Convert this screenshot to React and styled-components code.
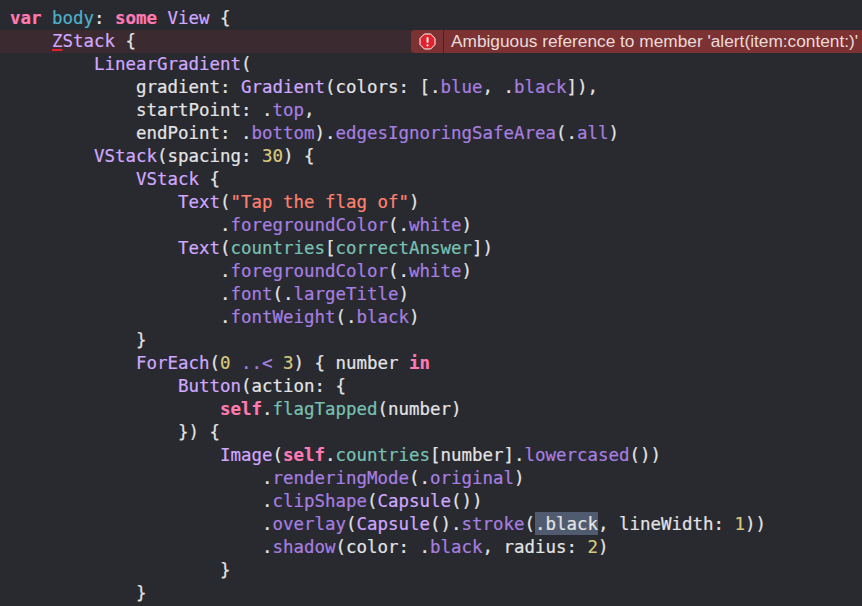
import React from "react";
import styled, { createGlobalStyle } from "styled-components";

const Global = createGlobalStyle`
  html, body { margin: 0; padding: 0; background: #292a30; }
  body { width: 862px; height: 606px; overflow: hidden; }
`;

const Editor = styled.div`
  width: 862px;
  height: 606px;
  overflow: hidden;
  padding-top: 7px;
  box-sizing: border-box;
  background: #292a30;
  color: #e4e4e5;
  font-family: "DejaVu Sans Mono", "Liberation Mono", monospace;
  font-size: 17.44px;
  font-weight: 400;
  -webkit-text-stroke: 0.2px;
`;

const Line = styled.div`
  display: flex;
  align-items: stretch;
  height: 23px;
  line-height: 23px;
  background: ${(p) => (p.$error ? "#3b2a2f" : "transparent")};
`;

const Code = styled.code`
  display: block;
  flex: 1;
  font: inherit;
  white-space: pre;
  padding-left: ${(p) => 10 + p.$indent * 42}px;
`;

const Kw = styled.span`color: #ff7ab2; font-weight: 700;`;
const Type = styled.span`color: #d0a8ff;`;
const Member = styled.span`color: #a77fe0;`;
const Str = styled.span`color: #ff8170;`;
const Num = styled.span`color: #d9c97c;`;
const Proj = styled.span`color: #78c2b3;`;
const Decl = styled.span`color: #4eb0cc;`;
const Selected = styled.span`
  display: inline-block;
  height: 22px;
  line-height: 22px;
  vertical-align: top;
  margin-top: -1px;
  padding-top: 1px;
  background: #515b70;
`;
const Squiggle = styled.span`
  color: #d0a8ff;
  text-decoration: underline;
  text-decoration-color: #e0202a;
  text-decoration-thickness: 2px;
  text-underline-offset: 2px;
`;

const Bubble = styled.div`
  display: flex;
  align-items: center;
  width: 451px;
  flex: none;
  background: #7c3232;
  border-radius: 4px 0 0 4px;
  overflow: hidden;
  -webkit-text-stroke: 0;
`;

const BubbleIcon = styled.div`
  display: flex;
  align-items: center;
  justify-content: center;
  width: 33px;
  height: 100%;
  flex: none;
  border-right: 1px solid #4f2020;
  box-sizing: border-box;
`;

const Message = styled.span`
  padding-left: 7px;
  color: #eadbdb;
  font-family: "Liberation Sans", Arial, sans-serif;
  font-size: 17.3px;
  white-space: nowrap;
`;

const ErrorIcon = () => (
  <svg width="17" height="17" viewBox="0 0 17 17">
    <path d="M5.4 1h6.2L16 5.4v6.2L11.6 16H5.4L1 11.6V5.4z" fill="#e1212b" stroke="#fff" strokeWidth="1" />
    <rect x="7.6" y="4" width="1.9" height="6" rx="0.9" fill="#fff" />
    <circle cx="8.5" cy="12.3" r="1.1" fill="#fff" />
  </svg>
);

const lines = [
  [0, <><Kw>var</Kw> <Decl>body</Decl>: <Kw>some</Kw> <Type>View</Type> {"{"}</>],
  [1, <><Squiggle>Z</Squiggle><Type>Stack</Type> {"{"}</>, true],
  [2, <><Type>LinearGradient</Type>(</>],
  [3, <>gradient: <Type>Gradient</Type>(colors: [.<Member>blue</Member>, .<Member>black</Member>]),</>],
  [3, <>startPoint: .<Member>top</Member>,</>],
  [3, <>endPoint: .<Member>bottom</Member>).<Member>edgesIgnoringSafeArea</Member>(.<Member>all</Member>)</>],
  [2, <><Type>VStack</Type>(spacing: <Num>30</Num>) {"{"}</>],
  [3, <><Type>VStack</Type> {"{"}</>],
  [4, <><Type>Text</Type>(<Str>"Tap the flag of"</Str>)</>],
  [5, <>.<Member>foregroundColor</Member>(.<Member>white</Member>)</>],
  [4, <><Type>Text</Type>(<Proj>countries</Proj>[<Proj>correctAnswer</Proj>])</>],
  [5, <>.<Member>foregroundColor</Member>(.<Member>white</Member>)</>],
  [5, <>.<Member>font</Member>(.<Member>largeTitle</Member>)</>],
  [5, <>.<Member>fontWeight</Member>(.<Member>black</Member>)</>],
  [3, <>{"}"}</>],
  [3, <><Type>ForEach</Type>(<Num>0</Num> <Member>..&lt;</Member> <Num>3</Num>) {"{"} number <Kw>in</Kw></>],
  [4, <><Type>Button</Type>(action: {"{"}</>],
  [5, <><Kw>self</Kw>.<Proj>flagTapped</Proj>(number)</>],
  [4, <>{"}"}) {"{"}</>],
  [5, <><Type>Image</Type>(<Kw>self</Kw>.<Proj>countries</Proj>[number].<Member>lowercased</Member>())</>],
  [6, <>.<Member>renderingMode</Member>(.<Member>original</Member>)</>],
  [6, <>.<Member>clipShape</Member>(<Type>Capsule</Type>())</>],
  [6, <>.<Member>overlay</Member>(<Type>Capsule</Type>().<Member>stroke</Member>(<Selected>.black</Selected>, lineWidth: <Num>1</Num>))</>],
  [6, <>.<Member>shadow</Member>(color: .<Member>black</Member>, radius: <Num>2</Num>)</>],
  [5, <>{"}"}</>],
  [3, <>{"}"}</>],
];

export default function App() {
  return (
    <>
      <Global />
      <Editor>
        {lines.map(([indent, content, error], i) => (
          <Line key={i} $error={error}>
            <Code $indent={indent}>{content}</Code>
            {error && (
              <Bubble>
                <BubbleIcon><ErrorIcon /></BubbleIcon>
                <Message>Ambiguous reference to member 'alert(item:content:)'</Message>
              </Bubble>
            )}
          </Line>
        ))}
      </Editor>
    </>
  );
}
